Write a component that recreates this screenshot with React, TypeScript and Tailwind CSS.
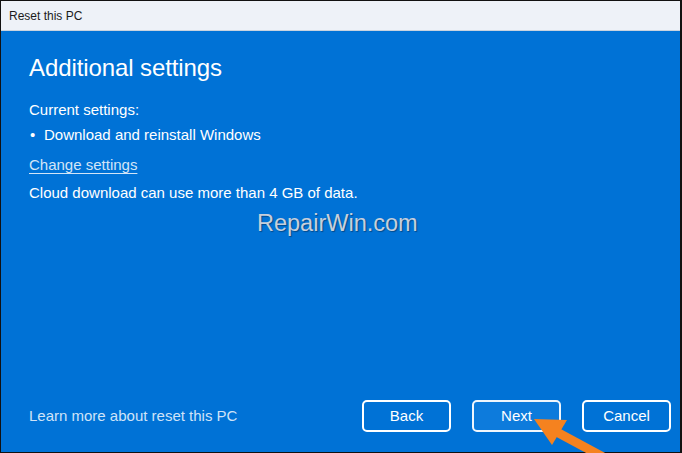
import React from "react";

const font = { fontFamily: '"Liberation Sans", Arial, sans-serif' };

function ArrowOverlay() {
  return (
    <svg
      className="absolute left-0 top-0 pointer-events-none"
      width={682}
      height={453}
      viewBox="0 0 682 453"
    >
      <line x1="605" y1="458" x2="553" y2="430" stroke="#f5821f" strokeWidth="9" />
      <polygon points="534,419 567,420 552,445" fill="#f5821f" />
    </svg>
  );
}

export default function App() {
  return (
    <div
      className="relative w-[682px] h-[453px] overflow-hidden bg-[#111] flex flex-col pl-px pb-px pr-[2px] pt-px"
      style={font}
    >
      {/* title bar */}
      <div className="h-[30px] bg-[#eef2f8] flex items-center pl-2 border-b border-[#c9d3df]">
        <span className="text-[12px] text-[#1b1b1b]">Reset this PC</span>
      </div>

      {/* body */}
      <div className="relative flex-1 bg-[#0072d6] text-white flex flex-col pl-7 pr-[9px]">
        <h1 className="mt-[22px] text-[24px] font-light leading-[30px] tracking-[-0.1px]">
          Additional settings
        </h1>
        <div className="mt-[17px] text-[15px] leading-5 flex flex-col">
          <span>Current settings:</span>
          <span className="mt-[5px] flex items-center">
            <span className="w-[15px] pl-[1px]">•</span>
            <span>Download and reinstall Windows</span>
          </span>
          <span className="mt-[10px] text-[#d3e5f7] underline underline-offset-[3px]">
            Change settings
          </span>
          <span className="mt-[8px]">Cloud download can use more than 4 GB of data.</span>
        </div>

        {/* watermark */}
        <div
          className="absolute left-[256px] top-[175px] text-[23.5px] text-[#c7cfdb]"
          style={{ ...font, textShadow: "1px 1px 1px rgba(0,0,0,0.35)" }}
        >
          RepairWin.com
        </div>

        <div className="mt-auto mb-[20px] flex items-center">
          <span className="text-[15px] text-[#cfe3f8]">Learn more about reset this PC</span>
          <div className="ml-auto flex gap-[21px]">
            <button className="w-[89px] h-[32px] rounded-[5px] border-2 border-white text-[15px] text-white">
              Back
            </button>
            <button className="w-[89px] h-[32px] rounded-[5px] border-2 border-[#f0f6fc] bg-[#0d7bdc] text-[15px] text-white">
              Next
            </button>
            <button className="w-[89px] h-[32px] rounded-[5px] border-2 border-white text-[15px] text-white">
              Cancel
            </button>
          </div>
        </div>
      </div>

      <ArrowOverlay />
    </div>
  );
}
